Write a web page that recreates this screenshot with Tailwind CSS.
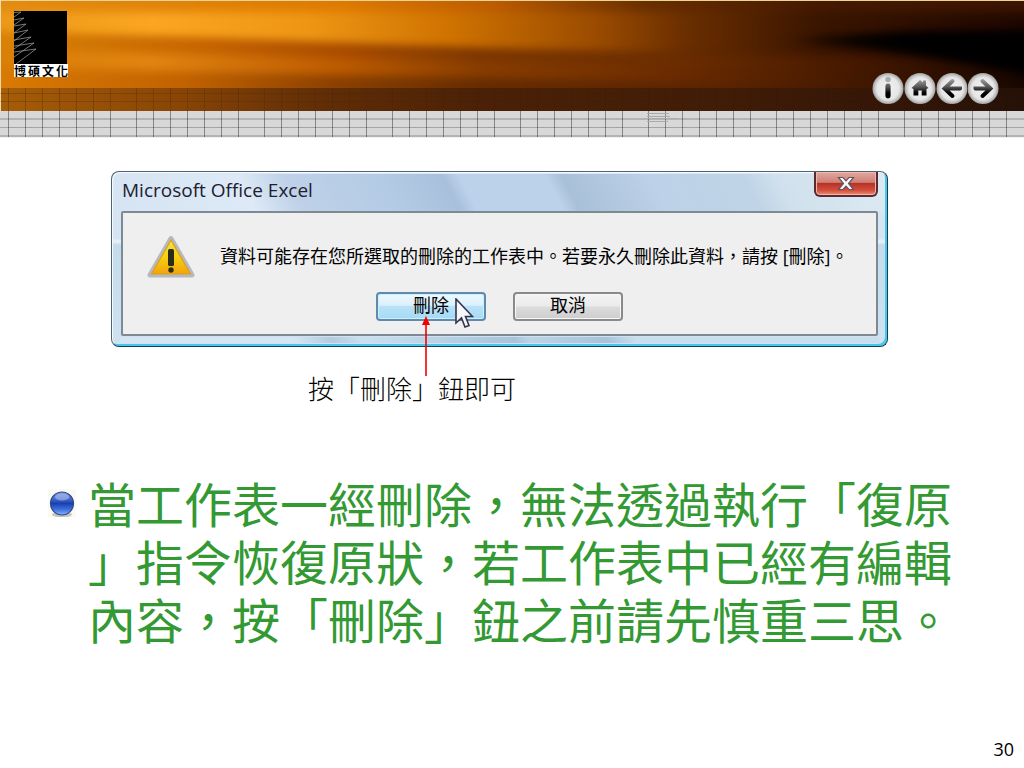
<!DOCTYPE html>
<html lang="zh-Hant">
<head>
<meta charset="utf-8">
<meta name="viewport" content="width=device-width, initial-scale=1">
<title>刪除工作表</title>
<script src="https://cdn.jsdelivr.net/npm/@tailwindcss/browser@4"></script>
</head>
<body class="flex min-h-screen flex-col bg-white font-['Open_Sans','Noto_Sans_CJK_TC',sans-serif] text-black">

<header class="relative h-[138px] overflow-hidden">
  <!-- Orange light streaks -->
  <svg class="absolute inset-x-0 top-0 h-[111px] w-full" viewBox="0 0 1024 111" preserveAspectRatio="none" aria-hidden="true">
    <defs>
      <linearGradient id="a" gradientUnits="userSpaceOnUse" x1="0" x2="1024"><stop offset="0" stop-color="#e28c10"/><stop offset=".33" stop-color="#df7a00"/><stop offset=".48" stop-color="#bd5c00"/><stop offset=".63" stop-color="#692e00"/><stop offset=".8" stop-color="#451900"/><stop offset="1" stop-color="#3d1400"/></linearGradient>
      <linearGradient id="b" gradientUnits="userSpaceOnUse" x1="0" x2="1024"><stop offset="0" stop-color="#ec9818"/><stop offset=".15" stop-color="#fba520"/><stop offset=".3" stop-color="#ee9614"/><stop offset=".44" stop-color="#cf7200"/><stop offset=".58" stop-color="#9c4c00"/><stop offset=".67" stop-color="#6a2e00"/><stop offset=".8" stop-color="#3a1500"/><stop offset="1" stop-color="#200800"/></linearGradient>
      <linearGradient id="c" gradientUnits="userSpaceOnUse" x1="0" x2="1024"><stop offset="0" stop-color="#d88205"/><stop offset=".2" stop-color="#c66400"/><stop offset=".33" stop-color="#aa4c00"/><stop offset=".47" stop-color="#7c3600"/><stop offset=".67" stop-color="#6b2d00"/><stop offset=".85" stop-color="#431700"/><stop offset="1" stop-color="#180700"/></linearGradient>
      <linearGradient id="d" gradientUnits="userSpaceOnUse" x1="0" x2="1024"><stop offset="0" stop-color="#da7f08"/><stop offset=".15" stop-color="#e18410"/><stop offset=".33" stop-color="#bd5b00"/><stop offset=".47" stop-color="#873c00"/><stop offset=".65" stop-color="#6d2c00"/><stop offset=".82" stop-color="#471a00"/><stop offset="1" stop-color="#180700"/></linearGradient>
      <linearGradient id="e" gradientUnits="userSpaceOnUse" x1="0" x2="1024"><stop offset="0" stop-color="#d87a04"/><stop offset=".18" stop-color="#c26200"/><stop offset=".33" stop-color="#8a4000"/><stop offset=".47" stop-color="#662b00"/><stop offset=".7" stop-color="#582300"/><stop offset=".88" stop-color="#3c1400"/><stop offset="1" stop-color="#1c0a02"/></linearGradient>
      <filter id="soft" x="-5%" y="-40%" width="110%" height="180%" color-interpolation-filters="sRGB"><feGaussianBlur stdDeviation="3 4"/></filter>
      <filter id="soft2" x="-20%" y="-60%" width="140%" height="220%" color-interpolation-filters="sRGB"><feGaussianBlur stdDeviation="18 4"/></filter>
      <linearGradient id="f"><stop offset="0" stop-color="#4a2810" stop-opacity=".35"/><stop offset=".3" stop-color="#33190c" stop-opacity=".5"/><stop offset="1" stop-color="#2c160c" stop-opacity=".6"/></linearGradient>
    </defs>
    <rect width="1024" height="111" fill="url(#e)"/>
    <g filter="url(#soft)">
      <rect x="-20" y="-20" width="1064" height="34" fill="url(#a)"/>
      <path d="M-20 12H1044V60L640 52L-20 34Z" fill="url(#b)"/>
      <path d="M-20 31L200 37L640 54L1044 60V100H-20Z" fill="url(#c)"/>
      <path d="M-20 49L340 58L700 66L1044 70V100H-20Z" fill="url(#d)"/>
      <path d="M-20 67L340 75L1044 90V130H-20Z" fill="url(#e)"/>
    </g>
    <path d="M800 40L900 31L1060 30V76L960 60L880 50Z" fill="#000" opacity=".8" filter="url(#soft2)"/>
    <path d="M850 40L940 34L1060 32V80L960 60Z" fill="#000" filter="url(#soft2)"/>
    <rect y="88" width="1024" height="23" fill="url(#f)"/>
    <rect width="1024" height="1" fill="#ecd396"/>
    <rect width="1" height="111" fill="#f0dcb0"/>
  </svg>
  <!-- Ruled strip: seven columns, then a wider one -->
  <svg class="absolute inset-x-0 top-[88px] h-[50px] w-full" aria-hidden="true">
    <defs>
      <pattern id="cols" patternUnits="userSpaceOnUse" width="128" height="50"><path d="M8.500 0V50M25.500 0V50M42.500 0V50M59.500 0V50M76.500 0V50M93.500 0V50M110.500 0V50" stroke="#000" stroke-opacity=".38"/></pattern>
      <linearGradient id="fade"><stop offset="0" stop-color="#fff" stop-opacity=".55"/><stop offset=".4" stop-color="#fff" stop-opacity=".1"/></linearGradient>
      <mask id="m"><rect width="100%" height="23" fill="url(#fade)"/></mask>
    </defs>
    <g mask="url(#m)"><rect width="100%" height="23" fill="url(#cols)"/><path d="M0 5.500H4000M0 13.500H4000" stroke="#000" stroke-opacity=".3"/></g>
    <rect y="23" width="100%" height="27" fill="#d8d8d8"/>
    <rect y="30" width="100%" height="2" fill="#b4b4b4"/><rect y="39" width="100%" height="1" fill="#a4a4a4"/><rect y="47" width="100%" height="2" fill="#b4b4b4"/>
    <rect y="23" width="100%" height="26" fill="url(#cols)"/>
    <rect y="49" width="100%" height="1" fill="#f0f0f0"/>
    <path d="M647 25.500H669M647 28.500H670M647 30.500H678M647 33.500H668" stroke="#aaa"/>
  </svg>

  <div class="relative flex items-start justify-between pl-3.5 pr-6 pt-[11px]">
    <div class="w-[54px]">
      <svg class="block h-[53px] w-[53px] bg-black" viewBox="0 0 53 53" fill="none" stroke="#a8a8a8" stroke-width=".7" aria-hidden="true">
        <path d="M0 1.500L7 1L0 6M0 9L10 7L0 14M0 15L12 13L0 22M0 22L14 19L0 30M0 29L17 26L0 38M0 35L20 32L0 46M0 41L22 38L2 53"/>
      </svg>
      <p class="flex h-[13px] items-center justify-between bg-white font-['Noto_Sans_CJK_TC',sans-serif] text-[12px] font-bold leading-3"><span>博</span><span>碩</span><span>文</span><span>化</span></p>
    </div>
    <nav class="flex pt-[61px]" aria-label="投影片導覽">
      <svg class="absolute size-0" aria-hidden="true">
        <defs>
          <radialGradient id="disc" cx=".5" cy=".5" r=".5"><stop offset="0" stop-color="#f2f2f2"/><stop offset=".72" stop-color="#e6e6e6"/><stop offset=".86" stop-color="#c6c6c6"/><stop offset="1" stop-color="#a2a2a2"/></radialGradient>
          <linearGradient id="ink" gradientUnits="userSpaceOnUse" x1="0" y1="5" x2="0" y2="25"><stop offset="0" stop-color="#b4b4b4"/><stop offset=".5" stop-color="#555"/><stop offset=".8" stop-color="#000"/></linearGradient>
        </defs>
      </svg>
      <a href="#info" aria-label="資訊"><svg class="size-8" viewBox="0 0 32 32"><circle cx="16" cy="16.500" r="15.500" fill="url(#disc)"/><circle cx="16" cy="7.500" r="2.700" fill="#a5adb0"/><rect x="13.400" y="11.500" width="5.200" height="15" rx="2.400" fill="url(#ink)"/></svg></a>
      <a href="#home" aria-label="首頁"><svg class="size-8" viewBox="0 0 32 32"><circle cx="16" cy="16.500" r="15.500" fill="url(#disc)"/><path d="M7.500 16L16 8L19 10.500V8.500H22V13.500L24.500 16L22.500 17V23.500H17.700V18.500H14.300V23.500H9.500V17Z" fill="url(#ink)"/></svg></a>
      <a href="#prev" aria-label="上一頁"><svg class="size-8" viewBox="0 0 32 32"><circle cx="16" cy="16.500" r="15.500" fill="url(#disc)"/><path d="M16.500 9L8.500 16.500L16.500 24M9 16.500H24L24 16.510" fill="none" stroke="url(#ink)" stroke-width="4" stroke-linecap="round"/></svg></a>
      <a href="#next" aria-label="下一頁"><svg class="size-8" viewBox="0 0 32 32"><circle cx="15" cy="16.500" r="15.500" fill="url(#disc)"/><path d="M14.500 9L22.500 16.500L14.500 24M22 16.500H7.500L7.500 16.510" fill="none" stroke="url(#ink)" stroke-width="4" stroke-linecap="round"/></svg></a>
    </nav>
  </div>
</header>

<main class="flex grow flex-col pt-[33px]">
  <section role="dialog" aria-labelledby="dlg" class="relative ml-[111px] mr-[136px] rounded-lg border border-[#50646e] border-b-[#173f50] border-r-[#173f50] bg-[linear-gradient(180deg,#dbe7f4_0%,#d5e4f2_38%,#eaf2f8_40%,#c4dcec_42%,#cfe2f0_100%)] px-[9px] pb-2.5 shadow-[inset_1px_1px_0_#f4faff,inset_-2px_-2px_0_#45c8ec]">
    <div class="absolute inset-x-0.5 top-0.5 h-[38px] rounded-t-md bg-[linear-gradient(62deg,#d5e4f3_0%,#dde9f6_18%,#bed1e8_24%,#b4cbe5_36%,#a9c0dc_44%,#bcd1ea_46%,#bcd1ea_57%,#a8c0d8_59%,#bdd1e8_70%,#bfd4e6_82%,#d0e1ed_86%,#dceaf3_100%)]"></div>
    <div class="absolute inset-x-2 bottom-[3px] h-1.5 bg-[linear-gradient(62deg,#d5e5f3_0%,#d5e5f3_23%,#b5c9e0_28%,#cbdff0_32%,#a9c3dc_52%,#bdd3e7_54%,#a9c3dc_64%,#cadeed_68%,#cadeed_100%)]"></div>
    <div class="relative flex h-[39px] items-start justify-between pl-px">
      <h1 id="dlg" class="py-1.5 text-[19px] leading-6 text-[#1c2030]">Microsoft Office Excel</h1>
      <button type="button" aria-label="關閉" class="flex h-[25px] w-16 items-center justify-center rounded-b-md border-2 border-t-0 border-[#5c2a2e] bg-[linear-gradient(180deg,#dfa9a2_0%,#cf8074_45%,#b53327_50%,#d4503c_80%,#ec8c74_100%)] shadow-[inset_0_0_0_1px_#efb8ae]">
        <svg class="h-[15px] w-[18px]" viewBox="0 0 18 15" aria-hidden="true"><path d="M1.500 1.500H6L9 4.800L12 1.500H16.500L11.500 7.500L16.500 13.500H12L9 10.200L6 13.500H1.500L6.500 7.500Z" fill="#fafafa" stroke="#65545c" stroke-width="1.200"/></svg>
      </button>
    </div>
    <div class="relative flex flex-col rounded-xs border-2 border-[#7d8a94] bg-[#efefef] pb-[13px] pt-[21px]">
      <div class="flex items-start gap-6 pl-[23px]">
        <svg class="h-[46px] w-[50px] shrink-0" viewBox="0 0 50 46" aria-hidden="true">
          <defs><linearGradient id="w" x1="0" x2="0" y1="0" y2="1"><stop offset="0" stop-color="#f0e24c"/><stop offset=".5" stop-color="#f7d010"/><stop offset="1" stop-color="#f2a30a"/></linearGradient></defs>
          <path d="M25 4.500L46 41H4Z" fill="#b8b8c0" stroke="#b8b8c0" stroke-width="5" stroke-linejoin="round"/>
          <path d="M25 6L44.500 40H5.500Z" fill="url(#w)" stroke="#dca018" stroke-width="1.200"/>
          <rect x="22" y="15" width="6" height="17" rx="1.500" fill="#2b2c18"/><circle cx="25" cy="36" r="2.700" fill="#2b2c18"/>
        </svg>
        <p class="pt-2.5 text-[18px] leading-6">資料可能存在您所選取的刪除的工作表中。若要永久刪除此資料，請按 [刪除]。</p>
      </div>
      <div class="mt-3 flex justify-center gap-[27px]">
        <div class="relative">
          <button type="button" class="block h-[29px] w-[110px] rounded-sm border-2 border-[#6189ab] bg-[linear-gradient(180deg,#edf8fe_0%,#dcf1fc_45%,#b9e2f8_50%,#a5daf5_100%)] pb-1 text-[18px] leading-5 shadow-[inset_0_0_0_1px_#c8f2fd]">刪除</button>
          <svg class="absolute left-[78px] top-1.5 h-8 w-5" viewBox="0 0 20 32" aria-hidden="true"><path d="M2 1V25L7.500 20L11 29L15 27.500L11.500 18.500H18.500Z" fill="#f7f7fb" stroke="#34344c" stroke-width="1.600"/></svg>
          <svg class="absolute left-[45px] top-6 h-[60px] w-[10px]" viewBox="0 0 10 60" aria-hidden="true"><path d="M5 6V60" stroke="#f00000" stroke-width="1.600"/><path d="M5 0L9 9H1Z" fill="#f00000"/></svg>
        </div>
        <button type="button" class="block h-[29px] w-[110px] rounded-sm border-2 border-[#8a8a8a] bg-[linear-gradient(180deg,#f3f3f3_0%,#ebebeb_48%,#dcdcdc_52%,#cdcdcd_100%)] pb-1 text-[18px] leading-5 shadow-[inset_0_0_0_1px_#f8f8f8]">取消</button>
      </div>
    </div>
  </section>
  <p class="pl-[308px] pt-[23px] font-['Noto_Sans_CJK_TC',sans-serif] text-[26px] font-light leading-9">按「刪除」鈕即可</p>

  <ul class="mt-[67px] pl-12 pr-16">
    <li class="flex gap-3">
      <svg class="mt-4 size-7 shrink-0" viewBox="0 0 28 28" aria-hidden="true">
        <defs><linearGradient id="ball" x1="0" x2="0" y1="0" y2="1"><stop offset="0" stop-color="#7f9bdc"/><stop offset=".35" stop-color="#3860cc"/><stop offset=".5" stop-color="#1c3fae"/><stop offset=".75" stop-color="#3d6fdc"/><stop offset="1" stop-color="#86b4fa"/></linearGradient></defs>
        <rect width="28" height="28" fill="#fafaf4"/><ellipse cx="14" cy="25.500" rx="10" ry="3" fill="#c4c8bc"/><circle cx="14" cy="14.500" r="11.500" fill="url(#ball)" stroke="#344684" stroke-width="1.200"/><ellipse cx="14" cy="8" rx="7" ry="3.600" fill="#b8c6ec" opacity=".55"/>
      </svg>
      <p class="whitespace-nowrap font-['Noto_Sans_CJK_TC',sans-serif] text-[48px] leading-[58px] text-[#339933]">當工作表一經刪除，無法透過執行「復原<br>」指令恢復原狀，若工作表中已經有編輯<br>內容，按「刪除」鈕之前請先慎重三思。</p>
    </li>
  </ul>
</main>

<footer class="flex justify-end px-2.5 pb-[7px] text-[18px] font-medium leading-6">30</footer>
</body>
</html>
